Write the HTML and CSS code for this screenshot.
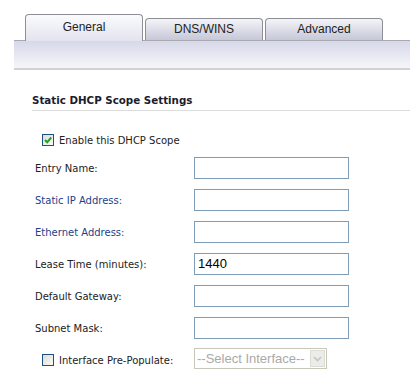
FILE: index.html
```html
<!DOCTYPE html>
<html>
<head>
<meta charset="utf-8">
<link rel="stylesheet" href="styles.css">
</head>
<body>
<div class="page">
  <div class="tabs">
    <div class="tab active">General</div>
    <div class="tab">DNS/WINS</div>
    <div class="tab">Advanced</div>
  </div>
  <div class="band"></div>

  <div class="section">
    <h2 class="heading">Static DHCP Scope Settings</h2>
    <div class="check-row">
      <span class="checkbox checked">
        <svg width="10" height="10" viewBox="0 0 10 10"><path d="M2 5 L4.2 7.3 L8.2 2.5" fill="none" stroke="#21a121" stroke-width="2"/></svg>
      </span>
      <span class="check-label">Enable this DHCP Scope</span>
    </div>
    <div class="form">
      <div class="label">Entry Name:</div>
      <div class="field"><span class="input"></span></div>
      <div class="label blue">Static IP Address:</div>
      <div class="field"><span class="input"></span></div>
      <div class="label blue">Ethernet Address:</div>
      <div class="field"><span class="input"></span></div>
      <div class="label">Lease Time (minutes):</div>
      <div class="field"><span class="input">1440</span></div>
      <div class="label">Default Gateway:</div>
      <div class="field"><span class="input"></span></div>
      <div class="label">Subnet Mask:</div>
      <div class="field"><span class="input"></span></div>
      <div class="label check-cell"><span class="checkbox"></span><span class="check-label">Interface Pre-Populate:</span></div>
      <div class="field">
        <span class="select">
          <span class="select-text">--Select Interface--</span>
          <span class="select-btn"><svg width="9" height="6" viewBox="0 0 9 6"><path d="M1 1 L4.5 4.5 L8 1" fill="none" stroke="#c4c4c4" stroke-width="1.6"/></svg></span>
        </span>
      </div>
    </div>
  </div>
</div>
</body>
</html>
```
FILE: styles.css
```css
html, body {
  margin: 0;
  padding: 0;
  background: #ffffff;
}
.page {
  width: 410px;
  height: 387px;
  overflow: hidden;
  font-family: "DejaVu Sans", sans-serif;
  font-size: 10px;
  color: #222;
}
.tabs {
  display: flex;
  align-items: flex-end;
  gap: 2px;
  padding: 14px 0 0 25px;
  height: 26px;
}
.tab {
  width: 116px;
  height: 21px;
  border: 1px solid #8e8e96;
  border-bottom: none;
  border-radius: 4px 4px 0 0;
  background: linear-gradient(#f4f4f8, #c6c7d8);
  font-family: "Liberation Sans", Arial, sans-serif;
  font-size: 12px;
  color: #222;
  text-align: center;
  line-height: 20px;
  box-sizing: content-box;
  position: relative;
  z-index: 1;
}
.tab.active {
  height: 26px;
  background: linear-gradient(#fbfbfd, #e2e3ee);
  line-height: 24px;
  margin-bottom: -1px;
  z-index: 2;
}
.band {
  margin-left: 14px;
  height: 27px;
  border-top: 1px solid #a9a9b0;
  border-bottom: 2px solid #d2d2d6;
  background: linear-gradient(#d6d8e9, #f6f6f9);
}
.section {
  padding: 24px 0 0 32px;
}
.heading {
  margin: 0;
  font-family: "DejaVu Sans", sans-serif;
  font-weight: bold;
  font-size: 10.3px;
  color: #1c1c2c;
  padding-bottom: 3px;
  border-bottom: 1px solid #dcdcdc;
  line-height: 13px;
}
.check-row {
  display: flex;
  align-items: center;
  gap: 5px;
  margin: 22px 0 0 10px;
  height: 14px;
}
.checkbox {
  width: 10px;
  height: 10px;
  border: 1px solid #1c5180;
  background: linear-gradient(135deg, #dcdcd8, #fafaf8);
  display: inline-flex;
  align-items: center;
  justify-content: center;
  flex: none;
}
.checkbox svg { display: block; }
.check-label {
  color: #222;
}
.form {
  display: grid;
  grid-template-columns: 159px 155px;
  grid-auto-rows: 22px;
  row-gap: 10px;
  margin-top: 10px;
  padding-left: 3px;
}
.label {
  display: flex;
  align-items: center;
  color: #222;
}
.label.blue {
  color: #233f8a;
}
.check-cell {
  gap: 5px;
  margin-left: 7px;
}
.field {
  display: flex;
  align-items: flex-start;
}
.input {
  width: 155px;
  height: 22px;
  box-sizing: border-box;
  border: 1px solid #7f9db9;
  background: #fff;
  font-family: "Liberation Sans", Arial, sans-serif;
  font-size: 13px;
  color: #000;
  padding-left: 3px;
  line-height: 20px;
}
.select {
  display: flex;
  width: 133px;
  height: 21px;
  box-sizing: border-box;
  border: 1px solid #c9c7ba;
  background: #fff;
  align-items: stretch;
  margin-top: -1px;
}
.select-text {
  flex: 1;
  font-family: "Liberation Sans", Arial, sans-serif;
  font-size: 13px;
  color: #a9a9a9;
  padding-left: 2px;
  line-height: 19px;
  white-space: nowrap;
  overflow: hidden;
}
.select-btn {
  width: 13px;
  margin: 1px;
  background: #ececea;
  border: 1px solid #dcdcd6;
  display: flex;
  align-items: center;
  justify-content: center;
}
```
